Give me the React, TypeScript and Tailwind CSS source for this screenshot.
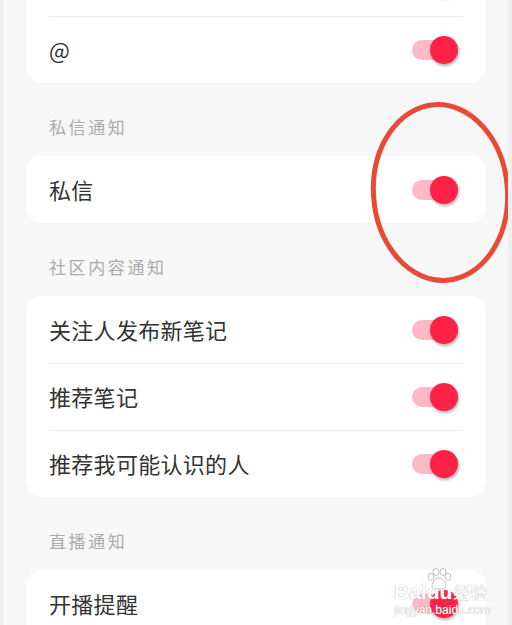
import React from "react";

const font = { fontFamily: '"Noto Sans CJK SC", "Noto Sans", sans-serif' };

function Toggle() {
  return (
    <div className="relative h-[28px] w-[46px] shrink-0">
      <div className="absolute left-0 top-[4px] h-[20px] w-[36px] rounded-full bg-[#fdb9c4]" />
      <div className="absolute right-0 top-0 h-[28px] w-[28px] rounded-full bg-[#fe2246] shadow-[1px_2px_3px_rgba(0,0,0,0.3)]" />
    </div>
  );
}

function Row({ label, divider }: { label: string; divider?: boolean }) {
  return (
    <div className="relative flex h-[67px] items-center justify-between pl-[23px] pr-[28px]">
      {divider && (
        <div className="absolute left-[23px] right-[23px] top-0 h-px bg-[#eeeeee]" />
      )}
      <span className="text-[22px] tracking-[0.3px] text-[#333333]">{label}</span>
      <Toggle />
    </div>
  );
}

function Header({ title }: { title: string }) {
  return (
    <div className="pb-[19px] pl-[49px] pt-[34px] text-[17px] leading-[20px] tracking-[2.6px] text-[#ababab]">
      {title}
    </div>
  );
}

function Card({ children, className = "" }: { children: React.ReactNode; className?: string }) {
  return (
    <div className={`mx-[26px] overflow-hidden rounded-[16px] bg-white ${className}`}>
      {children}
    </div>
  );
}

function Watermark() {
  return (
    <div className="pointer-events-none absolute left-[391px] top-[568px] w-[100px] text-white [text-shadow:0_0_1px_#8f8f8f]">
      <svg className="absolute left-[32px] top-0" width="26" height="22" viewBox="0 0 26 22">
        <g fill="white" stroke="#b0b0b0" strokeWidth="0.8">
          <ellipse cx="5" cy="9" rx="3" ry="3.5" />
          <ellipse cx="10" cy="4" rx="3" ry="3.5" />
          <ellipse cx="17" cy="4" rx="3" ry="3.5" />
          <ellipse cx="22" cy="9" rx="3" ry="3.5" />
          <path d="M13 10c-4 0-7 5-7 8s3 3 7 3 7 0 7-3-3-8-7-8z" />
        </g>
      </svg>
      <div className="flex items-end pt-[14px]">
        <span className="text-[21px] font-bold leading-[20px]" style={{ fontFamily: '"Liberation Sans", sans-serif' }}>
          Baidu
        </span>
        <span className="ml-[1px] text-[17px] leading-[20px]">经验</span>
      </div>
      <div className="text-[12px] leading-[16px]" style={{ fontFamily: '"Liberation Sans", sans-serif' }}>
        jingyan.baidu.com
      </div>
    </div>
  );
}

export default function App() {
  return (
    <div
      className="relative h-[625px] w-[512px] overflow-hidden border-l-[3px] border-r-[4px] border-[#efefef] bg-[#f7f7f7]"
      style={font}
    >
      <div className="-ml-[3px] w-[512px]">
        <Card className="-mt-[51px] rounded-t-none">
          <Row label="" />
          <Row label="@" divider />
        </Card>

        <Header title="私信通知" />
        <Card>
          <Row label="私信" />
        </Card>

        <Header title="社区内容通知" />
        <Card>
          <Row label="关注人发布新笔记" />
          <Row label="推荐笔记" divider />
          <Row label="推荐我可能认识的人" divider />
        </Card>

        <Header title="直播通知" />
        <Card>
          <Row label="开播提醒" />
          <Row label="" divider />
        </Card>
      </div>

      <svg
        className="pointer-events-none absolute left-0 top-0"
        width="512"
        height="625"
        viewBox="0 0 512 625"
      >
        <ellipse
          cx="437.5"
          cy="192.5"
          rx="67"
          ry="88"
          fill="none"
          stroke="#e84a36"
          strokeWidth="5"
          transform="rotate(-4 437.5 192.5)"
        />
      </svg>

      <Watermark />
    </div>
  );
}
